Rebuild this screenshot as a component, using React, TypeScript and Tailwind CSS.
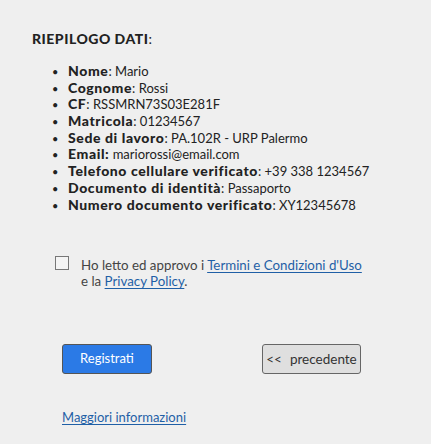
import React from "react";

const items: [string, string][] = [
  ["Nome", "Mario"],
  ["Cognome", "Rossi"],
  ["CF", "RSSMRN73S03E281F"],
  ["Matricola", "01234567"],
  ["Sede di lavoro", "PA.102R - URP Palermo"],
  ["Email:", "mariorossi@email.com"],
  ["Telefono cellulare verificato", "+39 338 1234567"],
  ["Documento di identità", "Passaporto"],
  ["Numero documento verificato", "XY12345678"],
];

export default function App() {
  return (
    <div
      className="w-[431px] h-[444px] bg-[#efefef] text-[#222] overflow-hidden"
      style={{ fontFamily: "Lato, 'Noto Sans', sans-serif" }}
    >
      <div className="pt-[31px] pl-[32px]">
        <div className="text-[14px] leading-[16px] font-black tracking-[0.5px]">
          RIEPILOGO DATI<span className="font-normal">:</span>
        </div>
        <ul className="mt-[16px] pl-[20px]">
          {items.map(([k, v]) => (
            <li key={k} className="flex items-baseline h-[16.7px] text-[14px] leading-[16.7px]">
              <span className="w-[16px] text-[11px]">•</span>
              <span className="font-black tracking-[0.6px]">{k}</span>
              {k.endsWith(":") ? (
                <span className="text-[13px]">&nbsp;{v}</span>
              ) : (
                <span className="text-[13px]">: {v}</span>
              )}
            </li>
          ))}
        </ul>
        <div className="mt-[41px] flex pl-[23px] text-[13.3px] leading-[16px] text-[#444]">
          <div className="w-[14px] h-[14px] border border-[#777] bg-[#f4f4f4] mt-[2px] shrink-0" />
          <div className="ml-[12px] mt-[3px]">
            Ho letto ed approvo i{" "}
            <a className="text-[#1f5fa6] underline underline-offset-2">Termini e Condizioni d'Uso</a>
            <br />e la <a className="text-[#1f5fa6] underline underline-offset-2">Privacy Policy</a>.
          </div>
        </div>
        <div className="mt-[55px] flex pl-[30px]">
          <button className="w-[90px] h-[30px] bg-[#2b7ae6] border border-[#555] rounded-[3px] text-white text-[13px]">
            Registrati
          </button>
          <button className="ml-[110px] w-[99px] h-[30px] bg-[#dfdfdf] border border-[#666] rounded-[3px] text-[#333] text-[13.5px] flex items-center justify-center gap-[8px]">
            <span>&lt;&lt;</span>
            <span>precedente</span>
          </button>
        </div>
        <div className="mt-[34px] pl-[30px] text-[13px]">
          <a className="text-[#1f5fa6] underline underline-offset-2">Maggiori informazioni</a>
        </div>
      </div>
    </div>
  );
}
